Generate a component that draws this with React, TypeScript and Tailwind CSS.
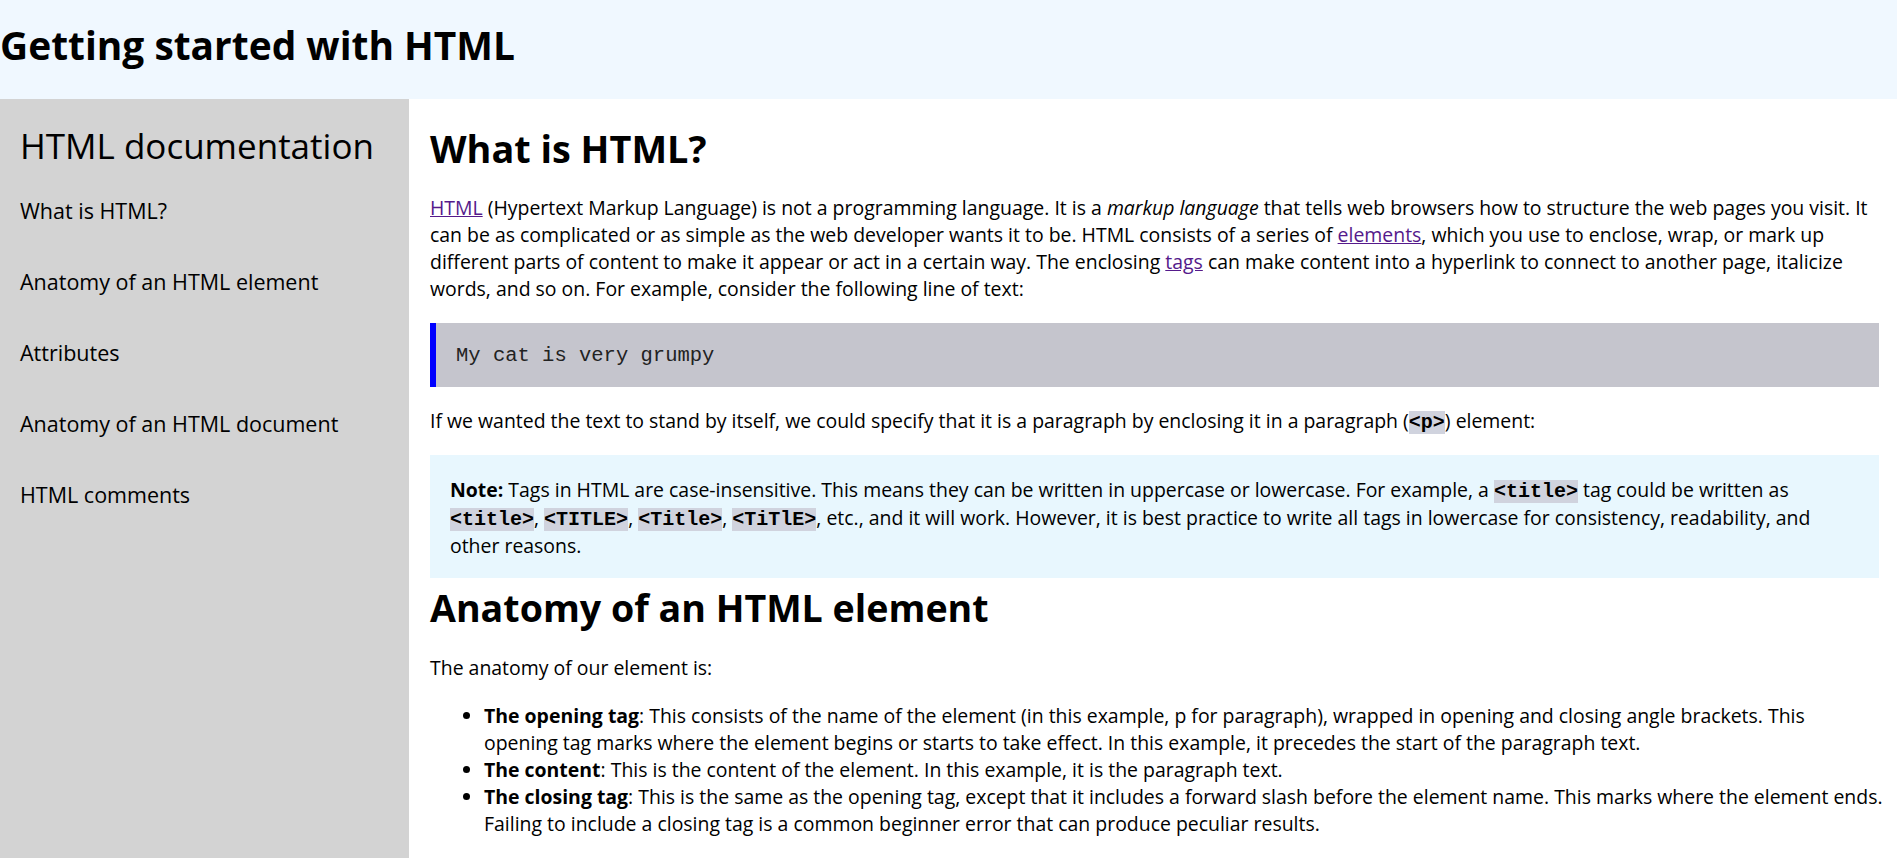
import React from "react";

const code =
  "font-['Liberation_Mono','Courier_New',monospace] font-bold text-[20px] leading-none bg-[#d0d3de]";

export default function App() {
  return (
    <div className="min-h-screen flex flex-col bg-white text-black font-['Open_Sans','Noto_Sans',sans-serif]">
      <header className="h-[99px] shrink-0 bg-[#f0f8ff] pt-[22px]">
        <h1 className="text-[38.9px] font-bold leading-[46px]">Getting started with HTML</h1>
      </header>
      <div className="flex flex-1">
        <nav className="w-[409px] shrink-0 bg-[#d3d3d3] pl-[20px] pt-[26px]">
          <h2 className="text-[35px] font-normal leading-[42px]">HTML documentation</h2>
          <ul className="mt-[29px] flex flex-col gap-[41px] text-[21.5px] leading-[30px]">
            <li>What is HTML?</li>
            <li>Anatomy of an HTML element</li>
            <li>Attributes</li>
            <li>Anatomy of an HTML document</li>
            <li>HTML comments</li>
          </ul>
        </nav>
        <main className="flex-1 min-w-0 pl-[21px] pr-[18px] pt-[27px] pb-[20px] text-[19.45px] leading-[27px]">
          <h2 className="text-[37.8px] font-bold leading-[46px]">What is HTML?</h2>
          <p className="mt-[22px] whitespace-nowrap">
            <a href="#" className="text-[#551a8b] underline">HTML</a> (Hypertext Markup Language) is not a
            programming language. It is a <em>markup language</em> that tells web browsers how to structure
            the web pages you visit. It
            <br />
            can be as complicated or as simple as the web developer wants it to be. HTML consists of a series of{" "}
            <a href="#" className="text-[#551a8b] underline">elements</a>, which you use to enclose, wrap, or
            mark up
            <br />
            different parts of content to make it appear or act in a certain way. The enclosing{" "}
            <a href="#" className="text-[#551a8b] underline">tags</a> can make content into a hyperlink to
            connect to another page, italicize
            <br />
            words, and so on. For example, consider the following line of text:
          </p>
          <div className="mt-[21px] h-[64px] flex items-center border-l-[6px] border-[#0000ff] bg-[#c5c5cd] pl-[20px]">
            <span className="font-['Liberation_Mono','Courier_New',monospace] text-[20.5px] text-[#222]">
              My cat is very grumpy
            </span>
          </div>
          <p className="mt-[20px]">
            If we wanted the text to stand by itself, we could specify that it is a paragraph by enclosing it in
            a paragraph (<code className={code}>&lt;p&gt;</code>) element:
          </p>
          <div className="mt-[21px] bg-[#e8f7fe] pl-[20px] pr-[20px] pt-[21px] pb-[18px] leading-[28px] whitespace-nowrap">
            <strong>Note:</strong> Tags in HTML are case-insensitive. This means they can be written in
            uppercase or lowercase. For example, a <code className={code}>&lt;title&gt;</code> tag could be
            written as
            <br />
            <code className={code}>&lt;title&gt;</code>, <code className={code}>&lt;TITLE&gt;</code>,{" "}
            <code className={code}>&lt;Title&gt;</code>, <code className={code}>&lt;TiTlE&gt;</code>, etc., and
            it will work. However, it is best practice to write all tags in lowercase for consistency,
            readability, and
            <br />
            other reasons.
          </div>
          <h2 className="mt-[7px] text-[37.6px] font-bold leading-[46px]">Anatomy of an HTML element</h2>
          <p className="mt-[23px]">The anatomy of our element is:</p>
          <ul className="mt-[21px] list-disc pl-[54px] whitespace-nowrap">
            <li>
              <strong>The opening tag</strong>: This consists of the name of the element (in this example, p for
              paragraph), wrapped in opening and closing angle brackets. This
              <br />
              opening tag marks where the element begins or starts to take effect. In this example, it precedes
              the start of the paragraph text.
            </li>
            <li>
              <strong>The content</strong>: This is the content of the element. In this example, it is the
              paragraph text.
            </li>
            <li>
              <strong>The closing tag</strong>: This is the same as the opening tag, except that it includes a
              forward slash before the element name. This marks where the element ends.
              <br />
              Failing to include a closing tag is a common beginner error that can produce peculiar results.
            </li>
          </ul>
        </main>
      </div>
    </div>
  );
}
